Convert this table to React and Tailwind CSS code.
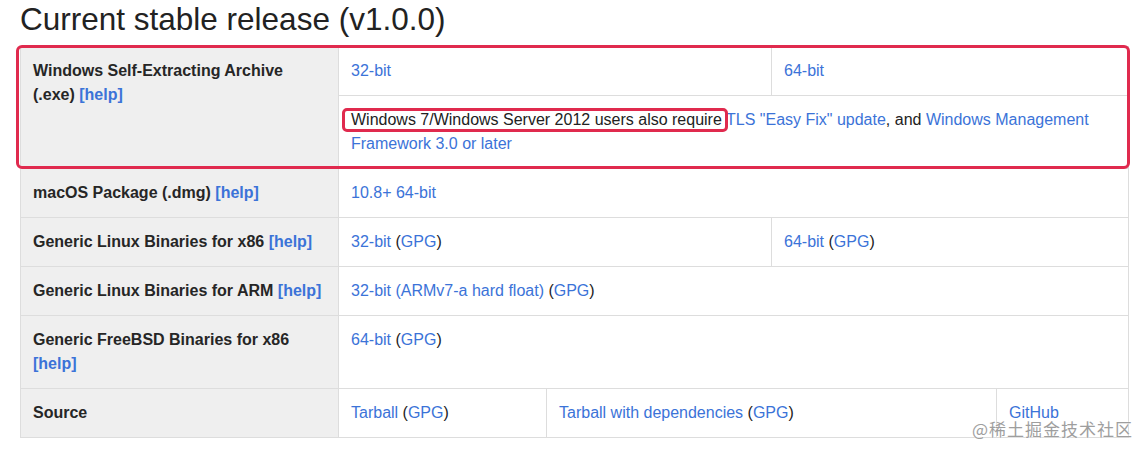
import React from "react";

const A = ({ children }) => <a className="text-[#3b73d8]">{children}</a>;
const Help = () => <A>[help]</A>;

const td = "border border-[#dddddd] px-[12px] py-[12px] align-top";
const th = "border border-[#dddddd] px-[12px] py-[12px] align-top bg-[#efefef] font-bold text-left text-[#262626]";

export default function App() {
  return (
    <div
      className="relative w-[1147px] h-[455px] bg-white overflow-hidden"
      style={{ fontFamily: '"Liberation Sans", Arial, sans-serif' }}
    >
      <div className="px-[20px]">
        <h1 className="pt-[2px] text-[31.5px] leading-[34px] font-normal text-[#222222] mb-[10px]">
          Current stable release (v1.0.0)
        </h1>
        <div className="relative w-[1108px]">
          <table className="w-[1108px] table-fixed border-collapse text-[16px] leading-[24px] text-[#222222]">
            <colgroup>
              <col className="w-[318px]" />
              <col className="w-[208px]" />
              <col className="w-[225px]" />
              <col className="w-[225px]" />
              <col className="w-[132px]" />
            </colgroup>
            <tbody>
              <tr>
                <th rowSpan={2} className={th}>
                  Windows Self-Extracting Archive (.exe) <Help />
                </th>
                <td colSpan={2} className={td}>
                  <A>32-bit</A>
                </td>
                <td colSpan={2} className={td}>
                  <A>64-bit</A>
                </td>
              </tr>
              <tr>
                <td colSpan={4} className={td}>
                  <span className="relative">
                    Windows 7/Windows Server 2012 users also require
                    <span className="absolute -left-[9px] -right-[6px] -top-[3px] -bottom-[4px] border-[3px] border-[#e02a4e] rounded-[5px]" />
                  </span>{" "}
                  <A>TLS "Easy Fix" update</A>, and{" "}
                  <A>Windows Management Framework 3.0 or later</A>
                </td>
              </tr>
              <tr>
                <th className={th}>
                  macOS Package (.dmg) <Help />
                </th>
                <td colSpan={4} className={td}>
                  <A>10.8+ 64-bit</A>
                </td>
              </tr>
              <tr>
                <th className={th}>
                  Generic Linux Binaries for x86 <Help />
                </th>
                <td colSpan={2} className={td}>
                  <A>32-bit</A> (<A>GPG</A>)
                </td>
                <td colSpan={2} className={td}>
                  <A>64-bit</A> (<A>GPG</A>)
                </td>
              </tr>
              <tr>
                <th className={th}>
                  Generic Linux Binaries for ARM <Help />
                </th>
                <td colSpan={4} className={td}>
                  <A>32-bit (ARMv7-a hard float)</A> (<A>GPG</A>)
                </td>
              </tr>
              <tr>
                <th className={th}>
                  Generic FreeBSD Binaries for x86 <Help />
                </th>
                <td colSpan={4} className={td}>
                  <A>64-bit</A> (<A>GPG</A>)
                </td>
              </tr>
              <tr>
                <th className={th}>Source</th>
                <td className={td}>
                  <A>Tarball</A> (<A>GPG</A>)
                </td>
                <td colSpan={2} className={td}>
                  <A>Tarball with dependencies</A> (<A>GPG</A>)
                </td>
                <td className={td}>
                  <A>GitHub</A>
                </td>
              </tr>
            </tbody>
          </table>
          <div className="pointer-events-none absolute -left-[4px] -top-[1px] w-[1114px] h-[124px] border-[3px] border-[#e02a4e] rounded-[6px]" />
        </div>
      </div>
      <div
        className="absolute left-[972px] top-[419px] text-[17px] leading-[20px] tracking-[1px] text-[#9e9e9e]"
        style={{ fontFamily: '"Noto Sans CJK SC", "Liberation Sans", sans-serif', textShadow: "0 0 1px #fff, 0 0 1px #fff" }}
      >
        @稀土掘金技术社区
      </div>
    </div>
  );
}
